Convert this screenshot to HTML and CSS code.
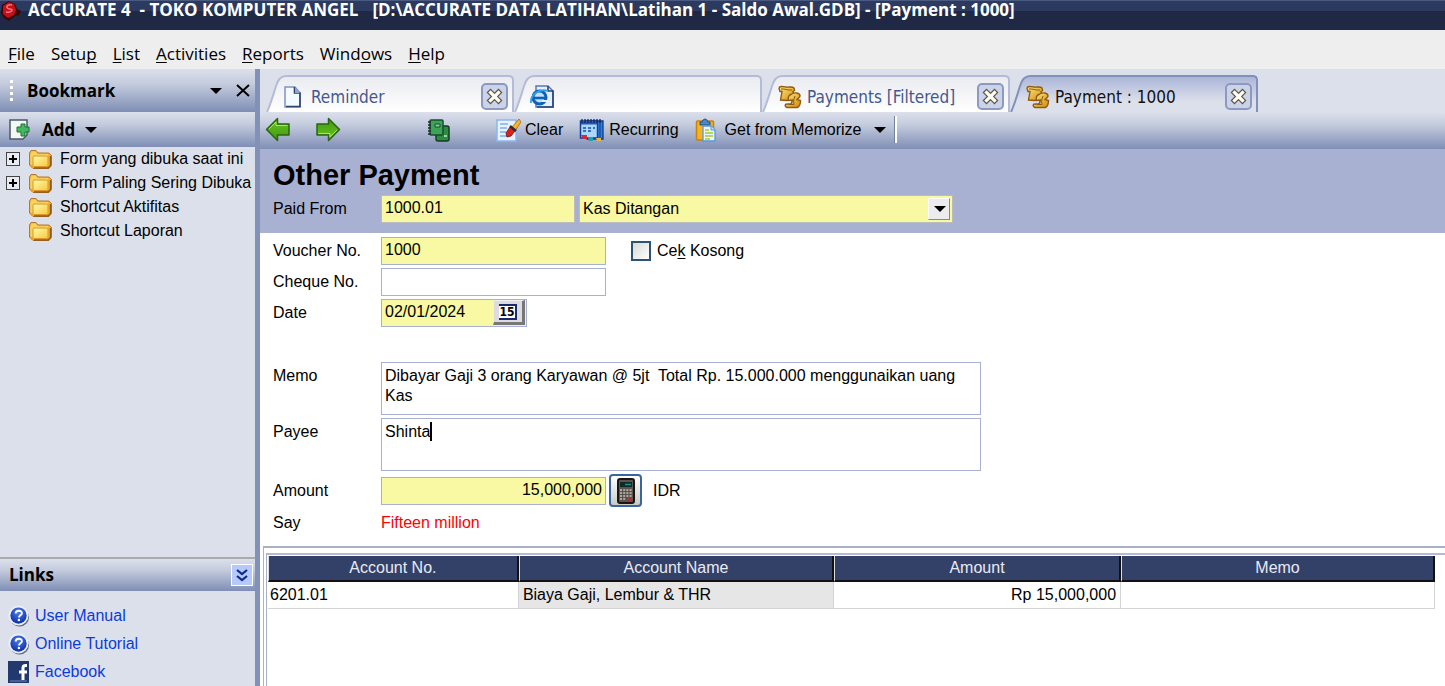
FILE: index.html
```
<!DOCTYPE html>
<html lang="id">
<head>
	<meta charset="UTF-8">
	<title>ACCURATE 4 - Payment : 1000</title>
	<link rel="stylesheet" href="styles.css">
</head>
<body>
	<!-- shared icons -->
	<svg class="defs" width="0" height="0">
		<defs>
			<linearGradient id="gFolder" x1="0" y1="0" x2="1" y2="1"><stop offset="0" stop-color="#fffbb0"/><stop offset="1" stop-color="#f8c93c"/></linearGradient>
			<linearGradient id="gGreen" x1="0" y1="0" x2="0" y2="1"><stop offset="0" stop-color="#6cc424"/><stop offset="1" stop-color="#3c9a0c"/></linearGradient>
			<linearGradient id="gGold" x1="0" y1="0" x2="1" y2="1"><stop offset="0" stop-color="#ffe680"/><stop offset="1" stop-color="#d08a10"/></linearGradient>
			<linearGradient id="gTab" x1="0" y1="0" x2="0" y2="1"><stop offset="0" stop-color="#eaebf0"/><stop offset="1" stop-color="#ffffff"/></linearGradient>
			<linearGradient id="gTabOn" x1="0" y1="0" x2="0" y2="1"><stop offset="0" stop-color="#abb6d8"/><stop offset="0.7" stop-color="#dce0eb"/></linearGradient>
			<radialGradient id="gBlue" cx="0.5" cy="0.3" r="0.7"><stop offset="0" stop-color="#4f7fe8"/><stop offset="1" stop-color="#0b2fa8"/></radialGradient>
		</defs>
		<symbol id="folder" viewBox="0 0 25 21">
			<path d="M1.500 4 3 1.500h5l2 2.500h11l2.500 2.500v10L21 19.500H5L1.500 16z" fill="#f3b234" stroke="#b9772a"/>
			<path d="M22.500 7v9.500L20 19H6" fill="none" stroke="#8a5a1c" stroke-width="1.400"/>
			<path d="M2.500 5 4 2.500h3.500L9.500 5H20v2H5v9l-2.500-1z" fill="#fbd25a"/>
			<rect x="5" y="7" width="15" height="10.500" rx="1" fill="url(#gFolder)" stroke="#d9962a"/>
		</symbol>
		<symbol id="pay" viewBox="0 0 24 23">
			<path d="M1 3C1 0 5 1 8 1.500c3 .5 6-1 8 1L16.500 5 15 6l2 6-8 3-6.500-.5L4 6H2z" fill="url(#gGold)" stroke="#8f5a12" stroke-width="1.400"/>
			<path d="M3 3.500C7 3 9 5 14 4.500" fill="none" stroke="#8f5a12"/>
			<path d="M13 9c3-2.500 9-2 9 1.500 0 2-2.500 2-3 3.500l3.500 1c0 4-1 6-3 7H9c-2.500-1-2.500-3.500 0-3.500h4l1.500-4-4 .5C9.500 12 11 9.500 13 9z" fill="url(#gGold)" stroke="#8f5a12" stroke-width="1.400"/>
			<path d="M17 10.500c-1 3-2 5-1 8.500h-5" fill="none" stroke="#8f5a12"/>
		</symbol>
		<symbol id="close" viewBox="0 0 17 17">
			<path d="M4.500 4.500l8 8M12.500 4.500l-8 8" stroke="#55554f" stroke-width="5.600" stroke-linecap="square"/>
			<path d="M4.500 4.500l8 8M12.500 4.500l-8 8" stroke="#fffdf0" stroke-width="3.200" stroke-linecap="square"/>
		</symbol>
		<symbol id="arrow" viewBox="0 0 26 25">
			<path d="M1.500 12.500 12.500 1.500V7H24v11H12.500v5.500z" fill="url(#gGreen)" stroke="#2b6412" stroke-width="1.500" stroke-linejoin="round"/>
			<path d="M4 12 11 5v3.500h11.500" fill="none" stroke="#a6e860" stroke-width="1"/>
		</symbol>
		<symbol id="help" viewBox="0 0 23 23">
			<circle cx="12" cy="12.500" r="10" fill="#5d6474"/>
			<circle cx="11" cy="11" r="10.500" fill="#e9eefa"/>
			<circle cx="11" cy="11" r="8.500" fill="url(#gBlue)"/>
			<path d="M8 9c0-4 6.500-4 6.500-.5 0 2.300-3 2.300-3 4.500" fill="none" stroke="#fff" stroke-width="2"/>
			<circle cx="11.400" cy="15.800" r="1.300" fill="#fff"/>
		</symbol>
		<symbol id="slope" viewBox="0 0 20 37">
			<path d="M0 37C6 30 9 1 20 1V37z"/>
			<path d="M1 37C4 31 7 21 10 11Q13 1 20 1" fill="none" stroke="currentColor" stroke-width="2"/>
		</symbol>
	</svg>

	<div class="titlebar">
		<svg class="logo" width="24" height="22" viewBox="0 0 24 22">
			<path d="M2 4 9 0l6 3 2 5 4 2-2 4-4 1-6 5-5-3-3-5z" fill="#3a0507"/>
			<path d="M3 5 9 1l5 2 2 6-2 5-6 3-5-4z" fill="#c4101c"/>
			<path d="M12 4C5 3 6 8 10 8s2 4-4 3" fill="none" stroke="#f5767a" stroke-width="1.500"/>
		</svg>
		<span class="app">ACCURATE 4&nbsp; - TOKO KOMPUTER ANGEL</span>
		<span>[D:\ACCURATE DATA LATIHAN\Latihan 1 - Saldo Awal.GDB] - [Payment : 1000]</span>
	</div>

	<nav class="menu">
		<a href="#"><u>F</u>ile</a>
		<a href="#">Setu<u>p</u></a>
		<a href="#"><u>L</u>ist</a>
		<a href="#"><u>A</u>ctivities</a>
		<a href="#"><u>R</u>eports</a>
		<a href="#">Wind<u>o</u>ws</a>
		<a href="#"><u>H</u>elp</a>
	</nav>

	<div class="body">
		<aside class="sidebar">
			<div class="bar bookmark">
				<i class="grip"></i>
				<span class="name">Bookmark</span>
				<button class="plain" aria-label="Menu"><i class="down"></i></button>
				<button class="plain" aria-label="Close">
					<svg width="15" height="13" viewBox="0 0 15 13"><path d="M1 1l12 11M13 1L1 12" stroke="#000" stroke-width="2"/></svg>
				</button>
			</div>
			<button class="bar add">
				<svg width="21" height="21" viewBox="0 0 21 21">
					<path d="M1 1h17v15l-4 4H1z" fill="#f4f8f2" stroke="#4a5a66" stroke-width="1.500"/>
					<path d="M12 5h4v3h4v5h-4v4h-4v-4H8V8h4z" fill="#44b860" stroke="#1d7138"/>
				</svg>
				<span>Add</span><i class="down"></i>
			</button>
			<ul class="tree">
				<li><button class="plus" aria-label="Expand"></button><svg class="fold"><use href="#folder"/></svg>Form yang dibuka saat ini</li>
				<li><button class="plus" aria-label="Expand"></button><svg class="fold"><use href="#folder"/></svg>Form Paling Sering Dibuka</li>
				<li><svg class="fold"><use href="#folder"/></svg>Shortcut Aktifitas</li>
				<li><svg class="fold"><use href="#folder"/></svg>Shortcut Laporan</li>
			</ul>
			<div class="bar links-head">
				<span class="name">Links</span>
				<button class="chevrons" aria-label="Collapse">
					<svg width="12" height="13" viewBox="0 0 12 13"><path d="M1 1l5 4 5-4M1 7l5 4 5-4" fill="none" stroke="#0a2a8c" stroke-width="2.200"/></svg>
				</button>
			</div>
			<ul class="links">
				<li><a href="#"><svg class="ic"><use href="#help"/></svg>User Manual</a></li>
				<li><a href="#"><svg class="ic"><use href="#help"/></svg>Online Tutorial</a></li>
				<li><a href="#"><svg class="ic" viewBox="0 0 22 22"><rect width="21" height="22" fill="#22396f"/><path d="M19 4.500h-1.500q-2.500 0-2.500 2.500v12M11 11h8" fill="none" stroke="#fff" stroke-width="3"/><path d="M2 20h17" stroke="#6f86bb"/></svg>Facebook</a></li>
			</ul>
		</aside>

		<main class="main">
			<div class="tabs">
				<div class="tab">
					<svg class="slope" fill="url(#gTab)"><use href="#slope"/></svg>
					<div class="face">
						<svg class="tabicon" viewBox="0 0 24 24"><path d="M3 2h10l5 6v14H3z" fill="#f5faff" stroke="#7c93c8" stroke-width="1.500"/><path d="M12.500 2v6H18v13.500H4" fill="none" stroke="#2b4470" stroke-width="1.600"/><path d="M13 2l5 6h-5z" fill="#8ea3c6"/></svg>
						<span>Reminder</span>
						<button class="x" aria-label="Close"><svg width="17" height="17"><use href="#close"/></svg></button>
					</div>
				</div>
				<div class="tab">
					<svg class="slope" fill="url(#gTab)"><use href="#slope"/></svg>
					<div class="face">
						<svg class="tabicon" viewBox="0 0 24 24"><path d="M6 1h12l5 5v16H6z" fill="#e6effc" stroke="#5a78b8" stroke-width="1.500"/><path d="M18 1v5h5v16H7" fill="none" stroke="#27457c" stroke-width="1.600"/><circle cx="9.500" cy="12.500" r="6.500" fill="#bfe2ff" stroke="#0f62b8" stroke-width="3"/><path d="M4 13h12" stroke="#0f62b8" stroke-width="2.600"/><path d="M12 16h6" stroke="#e6effc" stroke-width="2"/><path d="M1 18C0 10 9 3 18 6" fill="none" stroke="#35a2ea" stroke-width="1.800"/></svg>
					</div>
				</div>
				<div class="tab">
					<svg class="slope" fill="url(#gTab)"><use href="#slope"/></svg>
					<div class="face">
						<svg class="tabicon"><use href="#pay"/></svg>
						<span>Payments [Filtered]</span>
						<button class="x" aria-label="Close"><svg width="17" height="17"><use href="#close"/></svg></button>
					</div>
				</div>
				<div class="tab on">
					<svg class="slope" fill="url(#gTabOn)"><use href="#slope"/></svg>
					<div class="face">
						<svg class="tabicon"><use href="#pay"/></svg>
						<span>Payment : 1000</span>
						<button class="x" aria-label="Close"><svg width="17" height="17"><use href="#close"/></svg></button>
					</div>
				</div>
			</div>

			<div class="bar toolbar">
				<button class="nav" aria-label="Previous"><svg width="26" height="25"><use href="#arrow"/></svg></button>
				<button class="nav next" aria-label="Next"><svg width="26" height="25"><use href="#arrow"/></svg></button>
				<button class="copy" aria-label="Copy">
					<svg width="25" height="24" viewBox="0 0 25 24">
						<rect x="10" y="8" width="13" height="15" rx="2" fill="#2f8a45" stroke="#123f1e" stroke-width="1.500"/>
						<path d="M18 18h3" stroke="#8fd79d" stroke-width="2"/>
						<rect x="4" y="2" width="13" height="15" rx="1" fill="#3da356" stroke="#14502a" stroke-width="1.500"/>
						<path d="M9 6h5v3H9z" fill="#7fd48f" stroke="#14502a"/>
						<path d="M2 4h3M2 7h3M2 10h3M2 13h3M2 16h3" stroke="#1c2e22" stroke-width="1.300"/>
					</svg>
				</button>
				<button>
					<svg width="26" height="24" viewBox="0 0 26 24">
						<path d="M2 2h19v21H2z" fill="#e8f3ff" stroke="#8ab8f0" stroke-width="1.500"/>
						<path d="M5 6h8M5 10h7M5 14h6M5 18h9" stroke="#7fb0ee" stroke-width="1.500"/>
						<path d="M17 9l7-8 2 3-6 9z" fill="#f7b52c" stroke="#a5620c" stroke-width=".8"/>
						<path d="M11 15l4-6 5 4-4 5-4 1z" fill="#d8241c" stroke="#6d100c" stroke-width=".8"/>
						<path d="M15 8l6 5" stroke="#2d2d38" stroke-width="2.400"/>
					</svg>Clear
				</button>
				<button>
					<svg width="26" height="24" viewBox="0 0 26 24">
						<path d="M7 3h17v18H8z" fill="#2f7fdd" stroke="#113c86" stroke-width="1.300"/>
						<path d="M21 4v18" stroke="#113c86"/>
						<rect x="1.500" y="3" width="17" height="17" fill="#a9d8ff" stroke="#123f9b" stroke-width="1.500"/>
						<path d="M2 5h16" stroke="#2455c0" stroke-width="3"/>
						<path d="M3 1v4M6 1v4M9 1v4M12 1v4M15 1v4M18 1v4M21 1v4" stroke="#15254f" stroke-width="1.300"/>
						<path d="M4 10h3M9 10h3M14 10h2M4 13h3M9 13h3" stroke="#184aa0" stroke-width="1.500"/>
						<path d="M2 17h6v4H4z" fill="#d42a35"/><path d="M9 19h5v4h-4z" fill="#26a3a8"/><path d="M17 20h5v3h-4z" fill="#e8b83a"/>
					</svg>Recurring
				</button>
				<button class="memorize">
					<svg width="22" height="24" viewBox="0 0 22 24">
						<rect x="1.500" y="3" width="17" height="19" rx="1" fill="#f9b418" stroke="#c8830a" stroke-width="1.500"/>
						<path d="M5 4h2q1-3 3-3t3 3h2v3H5z" fill="#4a86c8" stroke="#234f8d"/>
						<path d="M8 8h8l4 4v11H8z" fill="#e9f5ff" stroke="#5598dd" stroke-width="1.300"/>
						<path d="M16 8v4h4" fill="#bcdcff" stroke="#5598dd"/>
						<path d="M10 12h4M10 15h8M10 18h8M10 21h5" stroke="#a9c92c" stroke-width="1.600"/>
					</svg>Get from Memorize<i class="down"></i>
				</button>
				<i class="sep"></i>
			</div>

			<form class="form">
				<section class="head">
					<h1>Other Payment</h1>
					<div class="row">
						<label for="from">Paid From</label>
						<input class="box need acc" id="from" type="text" value="1000.01">
						<span class="combo">
							<select class="box need" aria-label="Account"><option>Kas Ditangan</option></select>
							<i class="drop"></i>
						</span>
					</div>
				</section>
				<section class="fields">
					<div class="row">
						<label for="voucher">Voucher No.</label>
						<input class="box need" id="voucher" type="text" value="1000">
						<input class="check" id="kosong" type="checkbox">
						<label class="auto" for="kosong">Ce<u>k</u> Kosong</label>
					</div>
					<div class="row">
						<label for="cheque">Cheque No.</label>
						<input class="box" id="cheque" type="text">
					</div>
					<div class="row">
						<label for="date">Date</label>
						<div class="box need date">
							<input id="date" type="text" value="02/01/2024">
							<button type="button" class="cal"><b>15</b></button>
						</div>
					</div>
					<div class="row top memo">
						<label for="memo">Memo</label>
						<textarea class="box" id="memo">Dibayar Gaji 3 orang Karyawan @ 5jt  Total Rp. 15.000.000 menggunaikan uang Kas</textarea>
					</div>
					<div class="row top">
						<label for="payee">Payee</label>
						<span class="area"><textarea class="box" id="payee">Shinta</textarea><i class="caret"></i></span>
					</div>
					<div class="row amount">
						<label for="amount">Amount</label>
						<input class="box need" id="amount" type="text" value="15,000,000">
						<button type="button" class="calc" aria-label="Calculator">
							<svg width="18" height="26" viewBox="0 0 18 26">
								<rect x="1" y="1" width="16" height="24" rx="2" fill="#5a534e" stroke="#191512" stroke-width="2"/>
								<rect x="3" y="4" width="12" height="5" fill="#0c2c2c"/><path d="M8 6.500h6" stroke="#2d8a80" stroke-width="1.500"/>
								<path d="M3 12h12M3 15h12M3 18h12M3 21h6" stroke="#c9c2ba" stroke-width="1.500" stroke-dasharray="2 1.200"/>
								<path d="M10 21.500h5" stroke="#e02020" stroke-width="2"/>
							</svg>
						</button>
						<span>IDR</span>
					</div>
					<div class="row">
						<label for="say">Say</label>
						<output class="say" id="say">Fifteen million</output>
					</div>
				</section>
			</form>

			<div class="frame">
				<div class="grid">
					<table>
						<colgroup><col class="c1"><col class="c2"><col class="c3"><col class="c4"></colgroup>
						<thead>
							<tr><th>Account No.</th><th>Account Name</th><th>Amount</th><th>Memo</th></tr>
						</thead>
						<tbody>
							<tr><td>6201.01</td><td class="grey">Biaya Gaji, Lembur &amp; THR</td><td class="num">Rp 15,000,000</td><td></td></tr>
						</tbody>
					</table>
				</div>
			</div>
		</main>
	</div>
</body>
</html>
```
FILE: styles.css
```
*{
	box-sizing: border-box;
	margin: 0;
	padding: 0;
}
html, body{
	height: 100%;
}
body{
	display: flex;
	flex-direction: column;
	overflow: hidden;
	font: 16px/20px "Liberation Sans", Arial, sans-serif;
	color: #000;
	background: #fff;
}
button, input, select, textarea{
	font: inherit;
	color: inherit;
}
button{
	display: flex;
	align-items: center;
	border: 0;
	background: none;
}
ul{
	list-style: none;
}
a{
	color: inherit;
	text-decoration: none;
}
u{
	text-decoration-skip-ink: none;
	text-underline-offset: 2px;
}
svg{
	flex: none;
	display: block;
}
.defs{
	position: absolute;
}

/* window title and menu */
.titlebar{
	display: flex;
	align-items: flex-start;
	height: 30px;
	flex: none;
	border-top: 1px solid #4a5a80;
	background: linear-gradient(#2c3a5f 0, #2c3a5f 10px, #1f2945 10px);
	color: #fff;
	font: bold 17px/18px "Open Sans", "Noto Sans", sans-serif;
	white-space: nowrap;
}
.logo{
	margin-right: 4px;
}
.app{
	margin-right: 14px;
}
.menu{
	display: flex;
	gap: 16px;
	align-items: center;
	flex: none;
	height: 39px;
	padding: 8px 8px 0;
	background: #eee;
	font: 17px/24px "Open Sans", "Noto Sans", sans-serif;
}

.body{
	display: flex;
	flex: 1;
	min-height: 0;
}
.bar{
	display: flex;
	align-items: center;
	flex: none;
	background: linear-gradient(#dce0eb, #c3cbdd 35%, #7f8eb5);
}
.down{
	border: 6px solid transparent;
	border-top-color: #000;
	border-bottom: 0;
}

/* left panel */
.sidebar{
	display: flex;
	flex-direction: column;
	flex: none;
	width: 260px;
	border-right: 5px solid #8191b8;
	background: #dce0eb;
}
.bookmark{
	height: 43px;
	padding: 0 4px 0 10px;
}
.bookmark, .add, .links-head{
	font: bold 17px/24px "Open Sans", "Noto Sans", sans-serif;
}
.name{
	flex: 1;
}
.grip{
	width: 3px;
	height: 22px;
	margin-right: 14px;
	background: repeating-linear-gradient(#fff 0, #fff 3px, transparent 3px, transparent 6px);
}
.plain{
	margin-left: 14px;
}
.add{
	width: 100%;
	height: 35px;
	padding-left: 9px;
}
.add span{
	margin: 0 10px 0 12px;
}
.tree{
	flex: 1;
}
.tree li{
	display: flex;
	align-items: center;
	height: 24px;
	padding-left: 28px;
	white-space: nowrap;
}
.plus{
	width: 14px;
	height: 14px;
	margin: 0 8px 0 -22px;
	border: 1px solid #444;
	background: linear-gradient(#000, #000) center / 8px 2px no-repeat, linear-gradient(#000, #000) center / 2px 8px no-repeat, #e8ebf2;
}
.fold{
	width: 25px;
	height: 21px;
	margin-right: 7px;
}
.links-head{
	height: 34px;
	padding: 0 2px 0 9px;
	border-top: 2px solid #a9abb0;
}
.chevrons{
	justify-content: center;
	width: 22px;
	height: 22px;
	border: 1px solid #fff;
	background: #b7c9fb;
}
.links{
	padding: 11px 8px 0;
	color: #0a3bdc;
}
.links a{
	display: flex;
	align-items: center;
	gap: 5px;
	height: 28px;
}
.ic{
	width: 22px;
	height: 22px;
}

/* tabs */
.main{
	display: flex;
	flex-direction: column;
	flex: 1;
	min-width: 0;
}
.tabs{
	display: flex;
	align-items: flex-end;
	flex: none;
	height: 43px;
	padding-left: 6px;
	background: #dce0eb;
}
.tab{
	display: flex;
	width: 248px;
	height: 37px;
	color: #b3bbd6;
	font: 17px/20px "DejaVu Sans Condensed", "DejaVu Sans", sans-serif;
}
.tab.on{
	color: #8090b8;
}
.slope{
	width: 20px;
	height: 37px;
}
.face{
	display: flex;
	align-items: center;
	flex: 1;
	padding: 4px 4px 0 0;
	border-top: 2px solid;
	border-right: 2px solid;
	border-top-right-radius: 5px;
	background: linear-gradient(#eaebf0, #fff);
}
.on .face{
	background: linear-gradient(#abb6d8, #dce0eb 70%);
}
.face span{
	flex: 1;
	color: #44588f;
	white-space: nowrap;
}
.on .face span{
	color: #111;
}
.tabicon{
	width: 24px;
	height: 24px;
	margin: 0 5px 0 -4px;
}
.x{
	justify-content: center;
	width: 27px;
	height: 27px;
	border: 2px solid #8c99c2;
	border-radius: 5px;
	background: #ccd3e6;
}

/* toolbar */
.toolbar{
	height: 37px;
	padding: 0 0 2px 5px;
}
.toolbar button{
	margin-right: 16px;
	gap: 4px;
	white-space: nowrap;
}
.toolbar .nav{
	margin-right: 24px;
}
.toolbar .next{
	margin-right: 85px;
	transform: rotate(180deg);
}
.toolbar .copy{
	margin-right: 44px;
}
.toolbar .memorize{
	gap: 8px;
	margin-right: 8px;
}
.memorize .down{
	margin-left: 4px;
}
.sep{
	width: 3px;
	height: 27px;
	border-left: 1px solid #75809c;
	background: #fff;
}

/* payment form */
.head{
	padding: 8px 13px 10px;
	background: #a9b1d3;
}
h1{
	margin-bottom: 2px;
	font: bold 29px/36px "Liberation Sans", Arial, sans-serif;
}
.row{
	display: flex;
	align-items: center;
	margin-bottom: 3px;
}
.head .row{
	margin: 0;
}
.row label{
	flex: none;
	width: 108px;
}
.row .auto{
	width: auto;
}
.top{
	align-items: flex-start;
}
.top label{
	padding-top: 4px;
}
.box{
	width: 225px;
	height: 28px;
	padding: 0 3px 2px;
	border: 1px solid #a9b1d3;
	border-radius: 0;
	outline: 0;
	background: #fff;
}
.need{
	background: #f8f9a2;
}
.head .box{
	border-color: #b9bdc0;
}
.acc{
	width: 194px;
	margin-right: 4px;
}
.combo{
	position: relative;
	width: 374px;
}
.combo select{
	display: block;
	width: 100%;
	appearance: none;
	padding-bottom: 0;
}
.drop{
	position: absolute;
	top: 3px;
	right: 3px;
	width: 22px;
	height: 22px;
	border: 1px solid;
	border-color: #fff #888 #888 #fff;
	background: #ececee;
	pointer-events: none;
}
.drop::after{
	content: "";
	position: absolute;
	top: 7px;
	left: 5px;
	border: 6px solid transparent;
	border-top-color: #000;
	border-bottom: 0;
}
.fields{
	padding: 4px 13px 0;
}
.check{
	appearance: none;
	width: 20px;
	height: 20px;
	margin: 0 6px 0 25px;
	border: 2px solid #2c5374;
	background: linear-gradient(135deg, #d8d8d4, #fff);
}
.date{
	display: flex;
	width: 146px;
	padding: 0 1px 1px 0;
}
.date input{
	flex: 1;
	min-width: 0;
	padding: 0 3px 1px;
	border: 0;
	outline: 0;
	background: none;
}
.cal{
	justify-content: center;
	width: 32px;
	border: 1px solid;
	border-color: #eee #777 #777 #eee;
	border-width: 1px 3px 3px 1px;
	background: #dcdce0;
}
.cal b{
	border: 2px solid #1b2a6b;
	border-left: 0;
	background: #fff;
	font: bold 12px/12px "DejaVu Sans Condensed", sans-serif;
}
.memo{
	margin-top: 35px;
}
textarea.box{
	display: block;
	width: 600px;
	height: 53px;
	padding: 3px;
	overflow: hidden;
	resize: none;
}
.area{
	position: relative;
}
.caret{
	position: absolute;
	top: 4px;
	left: 49px;
	width: 2px;
	height: 19px;
	background: #000;
}
.amount{
	margin-bottom: 6px;
}
.amount .box{
	text-align: right;
}
.calc{
	justify-content: center;
	width: 33px;
	height: 33px;
	margin: 0 11px 0 3px;
	border: 2px solid #3a66a0;
	border-radius: 4px;
	background: linear-gradient(#fff, #c9c9c4);
}
.say{
	color: #f00;
}

/* detail table */
.frame{
	flex: 1;
	margin: 10px 0 0 3px;
	padding: 5px 0 0 2px;
	border-top: 2px solid #a9b1c8;
	border-left: 1px solid #a9b1c8;
}
.grid{
	height: 100%;
	padding: 1px 10px 0 1px;
	border-top: 2px solid #b5b8d8;
	border-left: 1px solid #a9b1c8;
}
table{
	width: 100%;
	table-layout: fixed;
	border-collapse: separate;
	border-spacing: 0;
}
.c1{
	width: 21.500%;
}
.c2{
	width: 27%;
}
.c3{
	width: 24.600%;
}
th{
	height: 26px;
	border-right: 2px solid #111;
	border-bottom: 2px solid #111;
	border-left: 1px solid #ddd;
	background: #334168;
	color: #e8ebf4;
	font-weight: normal;
}
td{
	height: 27px;
	padding: 0 4px;
	border-right: 1px solid #d4d4d4;
	border-bottom: 1px solid #d4d4d4;
}
td:first-child{
	padding-left: 2px;
}
.grey{
	background: #e6e6e6;
}
.num{
	text-align: right;
}
```
